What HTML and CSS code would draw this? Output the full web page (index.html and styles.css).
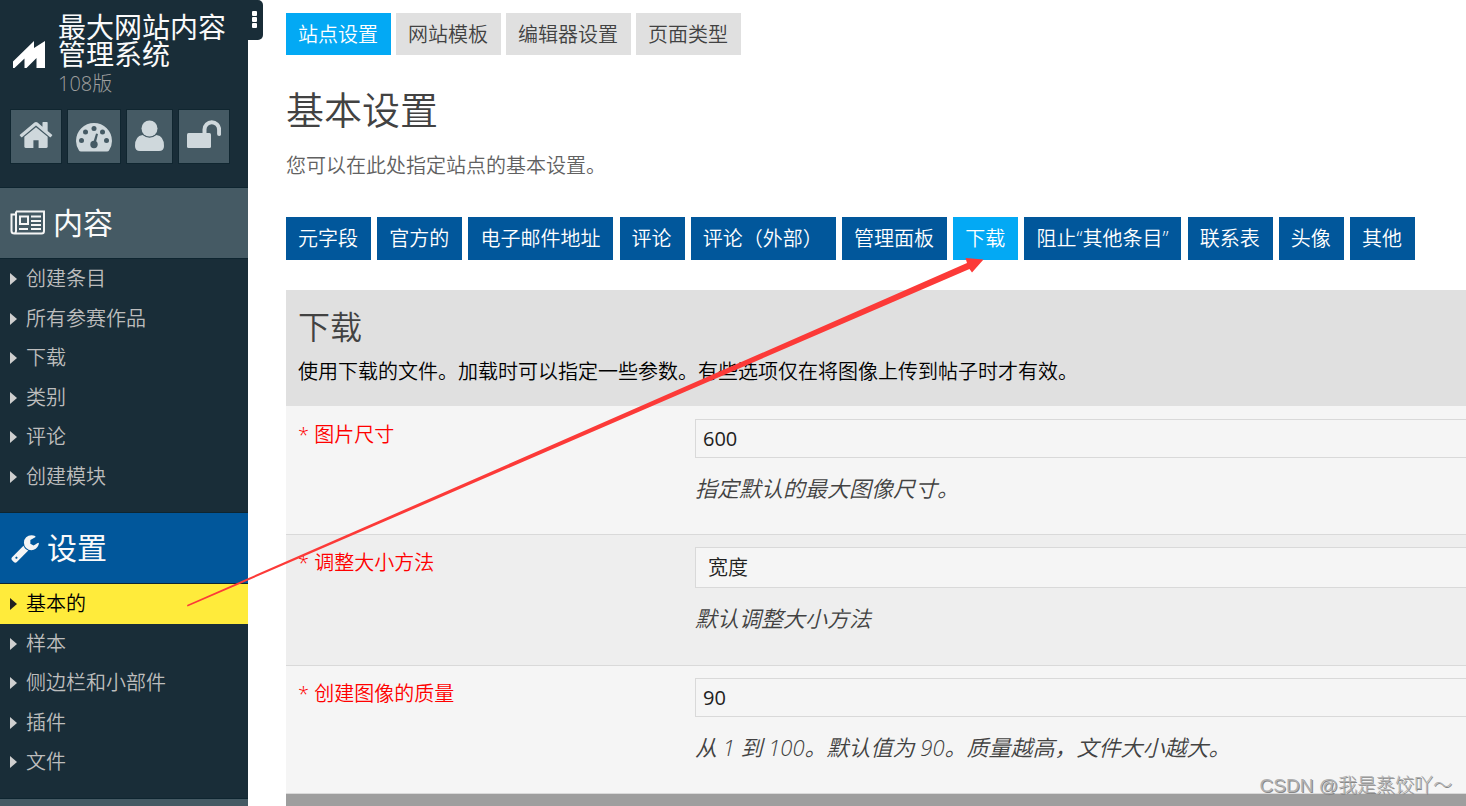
FILE: index.html
```html
<!DOCTYPE html>
<html lang="zh-CN">
<head>
<meta charset="utf-8">
<title>基本设置</title>
<link rel="stylesheet" href="styles.css">
</head>
<body>
<div class="layout">
  <aside class="sidebar">
    <header class="brand">
      <svg class="brand-logo" viewBox="0 0 32 28" aria-hidden="true"><path d="M0 27V20.500L21 0V7L32 0V27H23.500V17L13.500 27H11.500V17.500L1.500 27Z"/></svg>
      <div>
        <div class="brand-name">最大网站内容管理系统</div>
        <div class="brand-version">108版</div>
      </div>
    </header>
    <div class="quick">
      <a class="quick-link" href="#" aria-label="主页"><svg width="34" height="32" viewBox="56 154 1680 1581"><path d="M1472 992v480q0 26-19 45t-45 19h-384v-384h-256v384h-384q-26 0-45-19t-19-45v-480q0-1 .5-3t.5-3l575-474 575 474q1 2 1 6zm223-69l-62 74q-8 9-21 11h-3q-13 0-21-7l-692-577-692 577q-12 8-24 7-13-2-21-11l-62-74q-8-10-7-23.5t11-21.5l719-599q32-26 76-26t76 26l244 204v-195q0-14 9-23t23-9h192q14 0 23 9t9 23v408l219 182q10 8 11 21.5t-7 23.5z"/></svg></a>
      <a class="quick-link" href="#" aria-label="仪表板"><svg width="36" height="32" viewBox="0 -3 36 32"><path d="M3 27.500Q0 23 0 18a18 18 0 0 1 36 0Q36 23 33 27.500Q32.500 28.500 31 28.500H5Q3.500 28.500 3 27.500Z"/><g class="cutout"><circle cx="5.500" cy="17.500" r="2.500"/><circle cx="9.500" cy="9" r="2.500"/><circle cx="18" cy="5.500" r="2.500"/><circle cx="26.500" cy="9" r="2.500"/><circle cx="30.500" cy="17.500" r="2.500"/><circle cx="18" cy="21.500" r="3.700"/><path d="M16.800 21L20 10.500L22 11L19.500 21Z"/></g></svg></a>
      <a class="quick-link" href="#" aria-label="用户"><svg width="29" height="32" viewBox="0 0 29 32"><circle cx="14.500" cy="8.500" r="8"/><path d="M7.500 15Q14.500 20.500 21.500 15Q29 16 29 26Q29 31 24 31H5Q0 31 0 26Q0 16 7.500 15Z"/></svg></a>
      <a class="quick-link" href="#" aria-label="解锁"><svg width="34" height="32" viewBox="0 0 34 32"><rect x="0" y="13" width="24" height="15" rx="1.500"/><path class="shackle" d="M17.500 14V9.500a7.300 7.300 0 0 1 14.600 0V14"/></svg></a>
    </div>
    <nav>
      <h2 class="group"><svg width="36" height="26" viewBox="0 0 36 26" class="news" aria-hidden="true"><path d="M6 1.500H34V21Q34 23.500 31.500 23.500H4.500Q1.500 23.500 1.500 21V4.500H6M6 1.500V21Q6 23 4.500 23.500"/><path d="M10 6.500H18V14H10ZM21 6.500H31M21 11H31M21 15H31M9 19H18M21 19H31"/></svg>内容</h2>
      <ul class="menu">
        <li><a href="#">创建条目</a></li>
        <li><a href="#">所有参赛作品</a></li>
        <li><a href="#">下载</a></li>
        <li><a href="#">类别</a></li>
        <li><a href="#">评论</a></li>
        <li><a href="#">创建模块</a></li>
      </ul>
      <h2 class="group group-current"><svg width="30" height="30" viewBox="0 0 1792 1792" aria-hidden="true"><path d="M448 1472q0-26-19-45t-45-19-45 19-19 45 19 45 45 19 45-19 19-45zm644-420l-682 682q-37 37-90 37-52 0-91-37l-106-108q-38-36-38-90 0-53 38-91l681-681q39 98 114.500 173.500t173.500 114.500zm634-435q0 39-23 106-47 134-164.500 217.500t-258.500 83.500q-185 0-316.500-131.500t-131.500-316.500 131.500-316.500 316.500-131.500q58 0 121.500 16.500t107.500 46.500q16 11 16 28t-16 28l-293 169v224l193 107q5-3 79-48.500t135.500-81 70.500-35.500q15 0 23.500 10t8.500 25z"/></svg>设置</h2>
      <ul class="menu">
        <li><a class="current" href="#">基本的</a></li>
        <li><a href="#">样本</a></li>
        <li><a href="#">侧边栏和小部件</a></li>
        <li><a href="#">插件</a></li>
        <li><a href="#">文件</a></li>
      </ul>
      <div class="group"></div>
    </nav>
  </aside>
  <button class="toggle" aria-label="菜单"><i></i><i></i><i></i></button>

  <main class="main">
    <nav class="tabs">
      <a class="tab active" href="#">站点设置</a>
      <a class="tab" href="#">网站模板</a>
      <a class="tab" href="#">编辑器设置</a>
      <a class="tab" href="#">页面类型</a>
    </nav>
    <h1 class="title">基本设置</h1>
    <p class="lead">您可以在此处指定站点的基本设置。</p>
    <div class="sections">
      <button class="section">元字段</button>
      <button class="section">官方的</button>
      <button class="section">电子邮件地址</button>
      <button class="section">评论</button>
      <button class="section">评论（外部）</button>
      <button class="section">管理面板</button>
      <button class="section active">下载</button>
      <button class="section">阻止“其他条目”</button>
      <button class="section">联系表</button>
      <button class="section">头像</button>
      <button class="section">其他</button>
    </div>
    <form class="panel">
      <header class="panel-head">
        <h2 class="panel-title">下载</h2>
        <p class="panel-text">使用下载的文件。加载时可以指定一些参数。有些选项仅在将图像上传到帖子时才有效。</p>
      </header>
      <div class="row">
        <label class="label" for="size">* 图片尺寸</label>
        <div>
          <input class="field" id="size" type="text" value="600">
          <p class="hint">指定默认的最大图像尺寸。</p>
        </div>
      </div>
      <div class="row">
        <label class="label" for="method">* 调整大小方法</label>
        <div>
          <select class="field select" id="method"><option>宽度</option></select>
          <p class="hint">默认调整大小方法</p>
        </div>
      </div>
      <div class="row">
        <label class="label" for="quality">* 创建图像的质量</label>
        <div>
          <input class="field" id="quality" type="text" value="90">
          <p class="hint">从 1 到 100。默认值为 90。质量越高，文件大小越大。</p>
        </div>
      </div>
      <div class="panel-foot"></div>
    </form>
  </main>
</div>
<svg class="arrow" width="1000" height="620" viewBox="0 0 1000 620" aria-hidden="true"><path d="M187 605L967 263L965.500 258L983.500 259.500L972 272.500L969.500 269L187.500 606.500Z"/></svg>
<div class="watermark">CSDN @我是蒸饺吖～</div>
</body>
</html>
```

FILE: styles.css
```css
* {
  box-sizing: border-box;
}

body {
  margin: 0;
  height: 100vh;
  overflow: hidden;
  position: relative;
  font: 350 20px/30px "Open Sans", "Noto Sans CJK SC", sans-serif;
  color: #424242;
  background: #fff;
}

h1, h2, p, ul {
  margin: 0;
  padding: 0;
  font-weight: 350;
}

a {
  color: inherit;
  text-decoration: none;
}

button, input, select {
  font: inherit;
  border-radius: 0;
}

.layout {
  display: flex;
  align-items: flex-start;
  height: 100vh;
  overflow: hidden;
}

.sidebar {
  flex: 0 0 248px;
  height: 100%;
  overflow: hidden;
  background: #192d38;
}

.brand {
  display: flex;
  gap: 13px;
  padding: 14px 16px 0 13px;
}

.brand-logo {
  flex: none;
  width: 32px;
  height: 28px;
  margin-top: 27px;
  fill: #fff;
}

.brand-name {
  font-size: 28px;
  font-weight: 400;
  line-height: 27px;
  color: #fafafa;
}

.brand-version {
  padding-top: 1px;
  line-height: 30px;
  font-weight: 300;
  color: #9e9e9e;
}

.quick {
  display: flex;
  gap: 5px;
  padding: 10px 10px 23px;
}

.quick-link {
  padding: 10px 8px 0;
  height: 55px;
  border: 1px solid #102630;
  background: #455a64;
}

.quick-link svg {
  display: block;
  fill: #cfd8dc;
}

.quick-link .cutout {
  fill: #455a64;
}

.quick-link .shackle {
  fill: none;
  stroke: #cfd8dc;
  stroke-width: 4;
  stroke-linecap: round;
}

.group {
  display: flex;
  align-items: center;
  gap: 7px;
  height: 72px;
  padding-left: 10px;
  border-top: 1px solid #0e2530;
  border-bottom: 1px solid #0e2530;
  font-size: 30px;
  font-weight: 400;
  color: #fafafa;
  background: #455a64;
}

.group svg {
  fill: #f5f5f5;
}

.group .news {
  fill: none;
  stroke: #f5f5f5;
  stroke-width: 2;
}

.group-current {
  background: #01579b;
}

.menu {
  list-style: none;
  padding-bottom: 16px;
}

.menu a {
  display: flex;
  align-items: center;
  gap: 9px;
  height: 40px;
  padding-left: 10px;
  color: #bdbdbd;
}

.menu li:nth-child(even) a {
  height: 39px;
}

.menu a::before {
  content: "";
  border: 6px solid transparent;
  border-left: 7px solid #cfcfcf;
  border-right: 0;
}

.menu .current {
  color: #000;
  background: #ffeb3b;
}

.menu .current::before {
  border-left-color: #212121;
}

.toggle {
  display: flex;
  flex: 0 0 15px;
  flex-direction: column;
  align-items: center;
  justify-content: center;
  gap: 1px;
  height: 40px;
  padding: 0 3px 2px 0;
  border: 0;
  border-radius: 0 5px 5px 0;
  background: #192d38;
}

.toggle i {
  width: 5px;
  height: 5px;
  border-radius: 1px;
  background: #fff;
}

.main {
  flex: 1;
  min-width: 0;
  padding: 13px 0 0 23px;
}

.tabs {
  display: flex;
  gap: 5px;
}

.tab {
  padding: 7px 13px 5px 12px;
  background: #e0e0e0;
}

.tab.active {
  color: #fff;
  background: #03a9f4;
}

.title {
  margin-top: 29px;
  font-size: 38px;
  line-height: 50px;
}

.lead {
  margin-top: 17px;
  color: #616161;
}

.sections {
  margin: 36px 0 30px;
}

.section {
  height: 43px;
  margin-right: 1px;
  padding: 0 13px 0 12px;
  border: 0;
  vertical-align: top;
  color: #fff;
  background: #01579b;
}

.section.active {
  background: #03a9f4;
}

.panel-head {
  padding: 17px 12px 19px;
  background: #e0e0e0;
}

.panel-title {
  font-size: 32px;
  line-height: 40px;
}

.panel-text {
  margin-top: 10px;
  color: #000;
}

.row {
  display: grid;
  grid-template-columns: 397px 1fr;
  padding: 13px 0 31px 12px;
  border-bottom: 1px solid #d9d9d9;
  background: #f5f5f5;
}

.row:nth-child(odd) {
  padding-bottom: 32px;
  background: #eee;
}

.row + .row {
  padding-top: 12px;
}

.label {
  padding-top: 1px;
  color: #f00;
}

.field {
  display: block;
  width: 100%;
  height: 39px;
  padding: 0 7px;
  border: 1px solid #d9d9d9;
  border-right: 0;
  font-weight: 400;
  color: #212121;
  background: #f5f5f5;
}

.select {
  appearance: none;
  height: 41px;
  padding-left: 12px;
  font-weight: 350;
}

.hint {
  margin-top: 15px;
  font-size: 22px;
  font-style: italic;
}

.panel-foot {
  height: 60px;
  background: #9e9e9e;
}

.arrow {
  position: absolute;
  top: 0;
  left: 0;
  fill: #fc3a38;
  pointer-events: none;
}

.watermark {
  position: absolute;
  right: 14px;
  bottom: 5px;
  font-family: "Liberation Sans", "Noto Sans CJK SC", sans-serif;
  font-size: 19px;
  font-weight: 300;
  color: #b0b0b0;
  text-shadow: 1px 1px 0 #888;
}
```
